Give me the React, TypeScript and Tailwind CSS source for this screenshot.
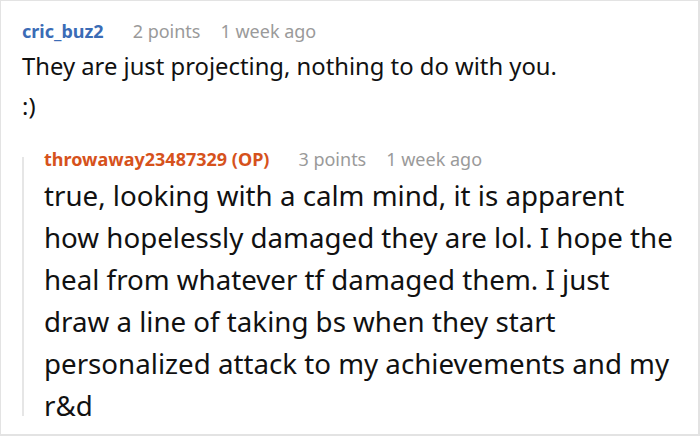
export default function App() {
  const font = { fontFamily: '"Noto Sans", "Open Sans", sans-serif' };
  const lines = [
    "true, looking with a calm mind, it is apparent",
    "how hopelessly damaged they are lol. I hope the",
    "heal from whatever tf damaged them. I just",
    "draw a line of taking bs when they start",
    "personalized attack to my achievements and my",
    "r&d",
  ];
  return (
    <div
      className="w-[700px] h-[436px] bg-white border-t border-l border-r-2 border-b-2 border-[#e3e3e3] overflow-hidden"
      style={font}
    >
      <div className="pl-[21px] pt-[17px]">
        <div className="flex items-baseline text-[18px] leading-[26px]">
          <span className="font-bold text-[#3b6cb6]">cric_buz2</span>
          <span className="ml-[29px] text-[#9a9a9a]">2 points</span>
          <span className="ml-[20px] text-[#9a9a9a]">1 week ago</span>
        </div>
        <div className="mt-[2px] text-[23.8px] leading-[40px] text-[#111]">
          They are just projecting, nothing to do with you.
          <br />
          :)
        </div>
        <div className="mt-[20px] flex items-start">
          <div className="mt-[11px] w-[2px] bg-[#e6e6e6] h-[259px] shrink-0"></div>
          <div className="pl-[20px]">
            <div className="mb-[2px] flex items-baseline text-[18px] leading-[26px]">
              <span className="font-bold text-[#d6521c]">throwaway23487329 (OP)</span>
              <span className="ml-[29px] text-[#9a9a9a]">3 points</span>
              <span className="ml-[20px] text-[#9a9a9a]">1 week ago</span>
            </div>
            <div className="text-[27.7px] leading-[42px] text-[#111] whitespace-nowrap">
              {lines.map((l, i) => (
                <div key={i}>{l}</div>
              ))}
            </div>
          </div>
        </div>
      </div>
    </div>
  );
}
